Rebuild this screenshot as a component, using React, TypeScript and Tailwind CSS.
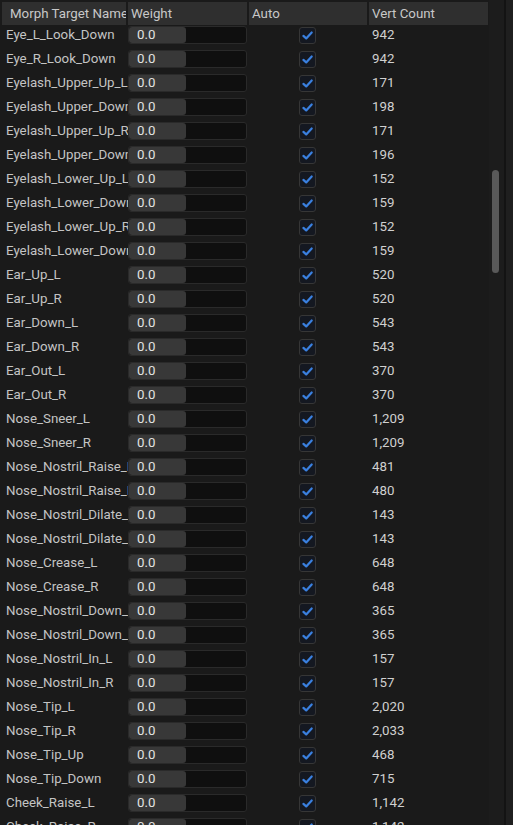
import React from "react";

type MorphRow = {
  name: string;
  verts: string;
};

const rows: MorphRow[] = [
  { name: "Eye_L_Look_Down", verts: "942" },
  { name: "Eye_R_Look_Down", verts: "942" },
  { name: "Eyelash_Upper_Up_L", verts: "171" },
  { name: "Eyelash_Upper_Down_L", verts: "198" },
  { name: "Eyelash_Upper_Up_R", verts: "171" },
  { name: "Eyelash_Upper_Down_R", verts: "196" },
  { name: "Eyelash_Lower_Up_L", verts: "152" },
  { name: "Eyelash_Lower_Down_L", verts: "159" },
  { name: "Eyelash_Lower_Up_R", verts: "152" },
  { name: "Eyelash_Lower_Down_R", verts: "159" },
  { name: "Ear_Up_L", verts: "520" },
  { name: "Ear_Up_R", verts: "520" },
  { name: "Ear_Down_L", verts: "543" },
  { name: "Ear_Down_R", verts: "543" },
  { name: "Ear_Out_L", verts: "370" },
  { name: "Ear_Out_R", verts: "370" },
  { name: "Nose_Sneer_L", verts: "1,209" },
  { name: "Nose_Sneer_R", verts: "1,209" },
  { name: "Nose_Nostril_Raise_L", verts: "481" },
  { name: "Nose_Nostril_Raise_R", verts: "480" },
  { name: "Nose_Nostril_Dilate_L", verts: "143" },
  { name: "Nose_Nostril_Dilate_R", verts: "143" },
  { name: "Nose_Crease_L", verts: "648" },
  { name: "Nose_Crease_R", verts: "648" },
  { name: "Nose_Nostril_Down_L", verts: "365" },
  { name: "Nose_Nostril_Down_R", verts: "365" },
  { name: "Nose_Nostril_In_L", verts: "157" },
  { name: "Nose_Nostril_In_R", verts: "157" },
  { name: "Nose_Tip_L", verts: "2,020" },
  { name: "Nose_Tip_R", verts: "2,033" },
  { name: "Nose_Tip_Up", verts: "468" },
  { name: "Nose_Tip_Down", verts: "715" },
  { name: "Cheek_Raise_L", verts: "1,142" },
  { name: "Cheek_Raise_R", verts: "1,142" },
];

function Checkbox() {
  return (
    <div className="flex h-[17px] w-[17px] items-center justify-center rounded-[3px] border border-[#363636] bg-[#141821]">
      <svg width="13" height="13" viewBox="0 0 13 13" fill="none">
        <path
          d="M2.4 6.9 L5.2 9.4 L10.7 3.5"
          stroke="#3a80e0"
          strokeWidth="2.2"
          strokeLinecap="round"
          strokeLinejoin="round"
        />
      </svg>
    </div>
  );
}

function WeightBox() {
  return (
    <div className="flex h-[18px] w-[119px] shrink-0 items-stretch rounded-[3px] border border-[#2a2a2a] bg-[#0f0f0f]">
      <div className="flex w-[57px] items-center rounded-[3px] bg-[#383838] pl-[8px] text-[#e2e2e2]">
        0.0
      </div>
    </div>
  );
}

export default function App() {
  return (
    <div
      className="flex h-[825px] w-[513px] overflow-hidden bg-[#1a1a1a] text-[13.3px] text-[#c4c4c4]"
      style={{ fontFamily: "Roboto, 'Noto Sans', sans-serif" }}
    >
      <div className="flex w-[489px] flex-col">
        <div className="flex h-[25px] shrink-0 gap-[2px] pl-[2px] pt-[2px] text-[#c8c8c8]">
          <div className="flex w-[124px] items-center overflow-hidden whitespace-nowrap bg-[#2f2f2f] pl-[8px]">
            Morph Target Name
          </div>
          <div className="flex w-[119px] items-center bg-[#2f2f2f] pl-[3px]">Weight</div>
          <div className="flex w-[118px] items-center bg-[#2f2f2f] pl-[3px]">Auto</div>
          <div className="flex w-[119px] items-center bg-[#2f2f2f] pl-[3px]">Vert Count</div>
        </div>
        <div className="-mt-[2px] flex flex-col">
          {rows.map((r) => (
            <div key={r.name} className="flex h-[24px] shrink-0 items-center">
              <div className="w-[128px] shrink-0 overflow-hidden whitespace-nowrap pl-[6px] pr-[1px]">
                {r.name}
              </div>
              <WeightBox />
              <div className="flex w-[120px] shrink-0 justify-center">
                <Checkbox />
              </div>
              <div className="pl-[5px] text-[#d0d0d0]">{r.verts}</div>
            </div>
          ))}
        </div>
      </div>
      <div className="flex w-[15px] flex-col bg-[#1c1c1c] pl-[3px] pt-[170px]">
        <div className="h-[103px] w-[7px] rounded-full bg-[#595959]" />
      </div>
      <div className="w-[2px] bg-[#131313]" />
      <div className="flex-1 bg-[#1f1f1f]" />
    </div>
  );
}
